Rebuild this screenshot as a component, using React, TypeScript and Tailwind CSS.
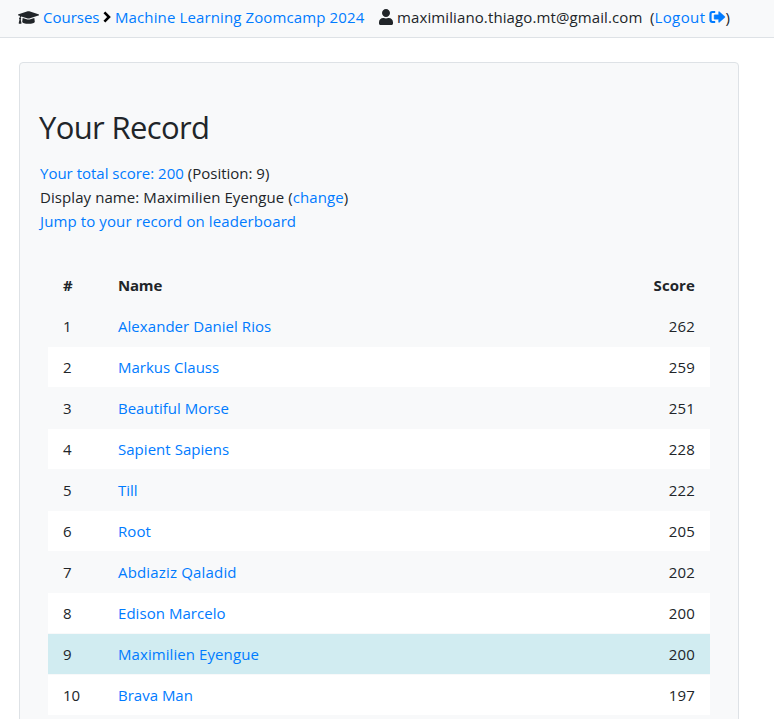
import { FaGraduationCap, FaUser } from "react-icons/fa";

const rows: [number, string, number, string][] = [
  [1, "Alexander Daniel Rios", 262, "tracking-[0.05px]"],
  [2, "Markus Clauss", 259, ""],
  [3, "Beautiful Morse", 251, ""],
  [4, "Sapient Sapiens", 228, "tracking-[0.03px]"],
  [5, "Till", 222, ""],
  [6, "Root", 205, "tracking-[0.1px]"],
  [7, "Abdiaziz Qaladid", 202, "tracking-[0.17px]"],
  [8, "Edison Marcelo", 200, "tracking-[0.05px]"],
  [9, "Maximilien Eyengue", 200, "tracking-[0.08px]"],
  [10, "Brava Man", 197, ""],
];

function rowColor(n: number) {
  if (n === 9) return "bg-[#d1ecf1]";
  return n % 2 === 0 ? "bg-white" : "";
}

function LogoutIcon() {
  return (
    <svg viewBox="0 0 17 16" className="h-4 w-[17px] shrink-0 text-[#007bff]" fill="none" stroke="currentColor">
      <path d="M6.2 3H3.4Q1.5 3 1.5 4.9v6.2Q1.5 13 3.4 13h2.8" strokeWidth="2.2" />
      <path d="M5.6 5.8h4V3.2q0-1 .8-.4l5.4 4.7q.5.5 0 1l-5.4 4.7q-.8.6-.8-.4v-2.6h-4q-.5 0-.5-.5V6.3q0-.5.5-.5z" fill="currentColor" strokeWidth=".4" />
    </svg>
  );
}

export default function App() {
  return (
    <div className="h-[719px] overflow-hidden bg-white font-['Open_Sans','Noto_Sans',sans-serif] text-[15px] leading-6 text-[#212529]">
      <nav className="flex h-[38px] items-center border-b border-[#dee2e6] bg-[#f8f9fa] pb-[3px] pl-[18px] whitespace-nowrap">
        <FaGraduationCap className="mr-1 h-[17px] w-[21px] shrink-0" />
        <a className="w-[60px] text-[#007bff]">Courses</a>
        <svg viewBox="0 0 8 12" className="mr-1 h-3 w-2 shrink-0" fill="none" stroke="#000" strokeWidth="2.6">
          <path d="M1.4 1.4 6 6 1.4 10.6" />
        </svg>
        <a className="w-[264px] tracking-[0.12px] text-[#007bff]">Machine Learning Zoomcamp 2024</a>
        <FaUser className="mr-1 h-4 w-[14px] shrink-0" />
        <span className="w-[253px] tracking-[0.11px]">maximiliano.thiago.mt@gmail.com</span>
        <span>(</span>
        <a className="mr-1 tracking-[0.4px] text-[#007bff]">Logout</a>
        <LogoutIcon />
        <span className="-ml-px">)</span>
      </nav>
      <main className="mt-6 ml-[19px] h-[700px] w-[720px] rounded border border-[#dee2e6] bg-[#f8f9fa] px-5 pt-[45px]">
        <h2 className="-ml-px text-[31px] leading-[38px] tracking-[-0.65px]">Your Record</h2>
        <div className="mt-[15px]">
          <p><a className="text-[#007bff]">Your total score: 200</a> (Position: 9)</p>
          <p className="tracking-[0.08px]">Display name: Maximilien Eyengue (<a className="text-[#007bff]">change</a>)</p>
          <p className="tracking-[0.11px]"><a className="text-[#007bff]">Jump to your record on leaderboard</a></p>
        </div>
        <div className="mt-8 ml-2 w-[662px]">
          <div className="flex h-10 items-center px-[15px] pb-px font-bold">
            <span className="w-[55px]">#</span>
            <span className="flex-1 tracking-[-0.2px]">Name</span>
            <span className="tracking-[0.1px]">Score</span>
          </div>
          {rows.map(([n, name, score, tracking]) => (
            <div key={n} className={`mt-px flex h-10 items-center px-[15px] pb-px ${rowColor(n)}`}>
              <span className="w-[55px]">{n}</span>
              <a className={`flex-1 text-[#007bff] ${tracking}`}>{name}</a>
              <span className="tracking-[0.15px]">{score}</span>
            </div>
          ))}
        </div>
      </main>
    </div>
  );
}
